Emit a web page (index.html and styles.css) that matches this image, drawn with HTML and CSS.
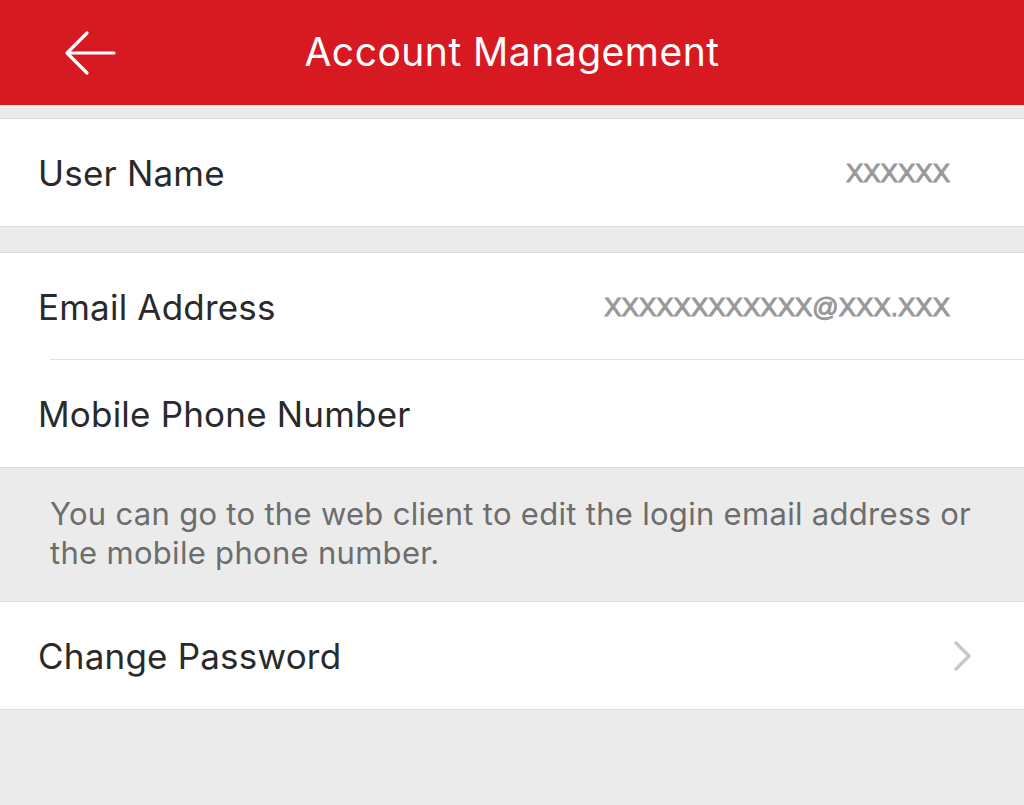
FILE: index.html
```html
<!DOCTYPE html>
<html>

<head>
    <link rel="stylesheet" href="styles.css">
</head>

<body>

    <div class="header">
        <div class="back">
            <svg width="56" height="50" viewBox="0 0 56 50">
                <path d="M52 25 H5 M25 5 L5 25 L25 45" fill="none" stroke="#fff" stroke-width="3.2" stroke-linecap="round" stroke-linejoin="round"/>
            </svg>
        </div>
        <h1>Account Management</h1>
    </div>

    <div class="group first">
        <div class="row">
            <span class="label">User Name</span>
            <span class="value">XXXXXX</span>
        </div>
    </div>

    <div class="group">
        <div class="row divided">
            <span class="label">Email Address</span>
            <span class="value">XXXXXXXXXXXX@XXX.XXX</span>
        </div>
        <div class="row">
            <span class="label">Mobile Phone Number</span>
        </div>
    </div>

    <p class="note">You can go to the web client to edit the login email address or the mobile phone number.</p>

    <div class="group">
        <div class="row">
            <span class="label">Change Password</span>
            <svg class="chevron" width="22" height="32" viewBox="0 0 22 32">
                <path d="M4 3 L17 16 L4 29" fill="none" stroke="#c7c7cc" stroke-width="3.4" stroke-linecap="round" stroke-linejoin="round"/>
            </svg>
        </div>
    </div>

</body>

</html>
```

FILE: styles.css
```css
body {
    margin: 0;
    background-color: #ebebeb;
    font-family: Inter, "Noto Sans", sans-serif;
    height: 805px;
    overflow: hidden;
}

.header {
    height: 105px;
    background-color: #d71921;
    display: flex;
    align-items: center;
    justify-content: center;
    position: relative;
}

.header h1 {
    margin: 0 0 2px;
    color: #fff;
    font-family: Inter, sans-serif;
    font-weight: 400;
    font-size: 39px;
    letter-spacing: 0.5px;
}

.back {
    position: absolute;
    left: 62px;
    top: 28px;
}

.group {
    background-color: #fff;
    border-top: 1px solid #dcdcdc;
    border-bottom: 1px solid #dcdcdc;
    margin-top: 25px;
}

.group.first {
    margin-top: 13px;
}

.row {
    height: 107px;
    display: flex;
    align-items: center;
    justify-content: space-between;
    padding: 0 74px 0 38px;
    position: relative;
}

.row.divided::after {
    content: "";
    position: absolute;
    left: 50px;
    right: 0;
    bottom: 0;
    border-bottom: 1px solid #e3e3e3;
}

.label {
    font-size: 35px;
    color: #2a2a2a;
    letter-spacing: 0.2px;
}

.value {
    font-family: "Liberation Sans", Arial, sans-serif;
    font-size: 26px;
    color: #999;
    padding-top: 2px;
    -webkit-text-stroke: 1px #999;
}

.chevron {
    margin-right: -24px;
}

.note {
    margin: 0;
    padding: 26px 30px 29px 50px;
    font-size: 31px;
    line-height: 39px;
    color: #6d6d6d;
    letter-spacing: 0.3px;
}

.note + .group {
    margin-top: 0;
}
```
